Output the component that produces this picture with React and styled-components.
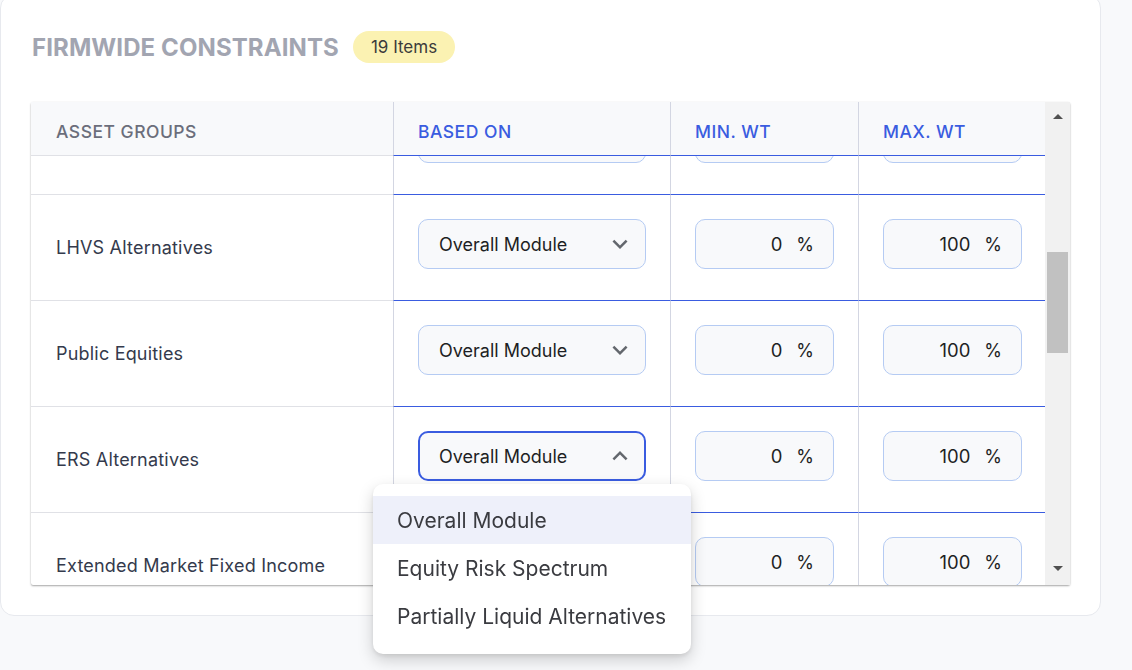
import React, { useLayoutEffect, useRef, useState } from 'react';
import styled, { createGlobalStyle } from 'styled-components';

const GlobalStyle = createGlobalStyle`
  html, body { margin: 0; padding: 0; }
  html { background: #f8f9fb; }
  body {
    background: #f8f9fb;
    font-family: Inter, "Noto Sans", "Liberation Sans", sans-serif;
    min-height: 670px;
  }
  * { box-sizing: border-box; }
`;

const COLS = '362px 277px 188px 188px';
const BLUE = '#3a5ce0';

const Card = styled.section`
  width: 1101px;
  margin-top: -6px;
  background: #fff;
  border: 1px solid #e7e9ee;
  border-radius: 14px;
  padding: 36px 30px 30px 30px;
`;

const TitleRow = styled.div`
  display: flex;
  align-items: center;
  gap: 14px;
  height: 32px;
  margin-bottom: 39px;
`;

const Title = styled.h2`
  margin: 0 0 0 1px;
  font-size: 24px;
  font-weight: 700;
  letter-spacing: 0.1px;
  color: #a2a5b1;
`;

const Badge = styled.span`
  display: inline-flex;
  align-items: center;
  height: 32px;
  padding: 0 18px;
  border-radius: 16px;
  background: #fbf2b2;
  color: #3b3b3b;
  font-size: 17px;
`;

const FrameWrap = styled.div`
  position: relative;
`;

const Frame = styled.div`
  display: flex;
  height: 483px;
  background: #fff;
  border-radius: 2px;
  box-shadow: 0 1px 2px rgba(0, 0, 0, 0.35), 0 0 1px rgba(0, 0, 0, 0.08);
`;

const ScrollArea = styled.div`
  flex: 1;
  overflow-y: auto;
  scrollbar-width: none;
  &::-webkit-scrollbar { display: none; }
`;

const HeaderRow = styled.div`
  position: sticky;
  top: 0;
  z-index: 2;
  display: grid;
  grid-template-columns: ${COLS};
  background: #f8f9fb;
`;

const HeadCell = styled.div`
  display: flex;
  align-items: center;
  height: 54px;
  padding: 5px 24px 0 ${(p) => (p.$first ? '25px' : '24px')};
  border-left: ${(p) => (p.$first ? 'none' : '1px solid #d3d6e2')};
  border-bottom: 1px solid ${(p) => (p.$first ? '#e0e1e6' : BLUE)};
  font-size: 17.5px;
  font-weight: 500;
  letter-spacing: 0.5px;
  color: ${(p) => (p.$first ? '#6b6e7b' : BLUE)};
  text-transform: uppercase;
`;

const Row = styled.div`
  display: grid;
  grid-template-columns: ${COLS};
`;

const Cell = styled.div`
  display: flex;
  align-items: center;
  height: 106px;
  padding: 0 24px 0 ${(p) => (p.$first ? '25px' : '24px')};
  border-left: ${(p) => (p.$first ? 'none' : '1px solid #d3d6e2')};
  border-bottom: 1px solid ${(p) => (p.$first ? '#e0e1e6' : BLUE)};
`;

const Label = styled.span`
  font-size: 18px;
  color: #343a4c;
  letter-spacing: 0.2px;
`;

const SelectBox = styled.div`
  display: flex;
  align-items: center;
  justify-content: space-between;
  width: 100%;
  height: 50px;
  margin-bottom: 7px;
  padding: ${(p) => (p.$open ? '0 9px 0 19px' : '0 10px 0 20px')};
  background: #f8f9fb;
  border: ${(p) => (p.$open ? `2px solid ${BLUE}` : '1px solid #b5cbf3')};
  border-radius: 10px;
  font-size: 18px;
  color: #1e1f24;
`;

const Chevron = styled.svg`
  width: 30px;
  height: 30px;
  fill: #63676d;
  transform: ${(p) => (p.$up ? 'rotate(180deg)' : 'none')};
`;

const NumberBox = styled.div`
  display: flex;
  align-items: center;
  justify-content: flex-end;
  gap: 14px;
  width: 100%;
  height: 50px;
  margin-bottom: 7px;
  padding-right: 19px;
  background: #f8f9fb;
  border: 1px solid #b5cbf3;
  border-radius: 10px;
  font-size: 18.5px;
  color: #1e1f24;
`;

const Percent = styled.span`
  font-size: 18px;
`;

const ScrollBar = styled.div`
  display: flex;
  flex-direction: column;
  width: 25px;
  background: #f1f1f1;
`;

const ArrowBtn = styled.div`
  display: flex;
  align-items: center;
  justify-content: center;
  height: 26px;
`;

const Triangle = styled.span`
  width: 0;
  height: 0;
  border-left: 5px solid transparent;
  border-right: 5px solid transparent;
  ${(p) =>
    p.$down
      ? 'border-top: 5px solid #505050; margin-top: -8px;'
      : 'border-bottom: 5px solid #505050; margin-top: 2px;'}
`;

const Track = styled.div`
  position: relative;
  flex: 1;
`;

const Thumb = styled.div`
  position: absolute;
  left: 2px;
  right: 2px;
  background: #c1c1c1;
`;

const Menu = styled.ul`
  position: absolute;
  left: 342px;
  top: 382px;
  z-index: 10;
  width: 318px;
  margin: 0;
  padding: 12px 0 14px 0;
  list-style: none;
  background: #fff;
  border-radius: 10px;
  box-shadow: 0 6px 16px rgba(0, 0, 0, 0.18), 0 2px 4px rgba(0, 0, 0, 0.08);
`;

const MenuItem = styled.li`
  display: flex;
  align-items: center;
  height: 48px;
  padding: 0 24px;
  font-size: 21px;
  color: #3a3b40;
  background: ${(p) => (p.$active ? '#eef0fa' : 'transparent')};
`;

const ASSETS = [
  'US Large Cap Equities',
  'International Equities',
  'Emerging Markets Equities',
  'Core Fixed Income',
  'Municipal Bonds',
  'Private Equity',
  'LHVS Alternatives',
  'Public Equities',
  'ERS Alternatives',
  'Extended Market Fixed Income',
  'Hedge Funds',
  'Real Estate',
  'Commodities',
  'Cash Equivalents',
  'Inflation Protected Bonds',
  'High Yield Bonds',
  'Infrastructure',
  'Private Credit',
  'Global Macro',
];

const OPTIONS = ['Overall Module', 'Equity Risk Spectrum', 'Partially Liquid Alternatives'];

const ChevronIcon = ({ up }) => (
  <Chevron viewBox="0 0 24 24" $up={up}>
    <path d="M16.59 8.59 12 13.17 7.41 8.59 6 10l6 6 6-6z" />
  </Chevron>
);

export default function App() {
  const scrollRef = useRef(null);
  const trackRef = useRef(null);
  const [thumb, setThumb] = useState({ top: 0, height: 0 });

  useLayoutEffect(() => {
    const el = scrollRef.current;
    el.scrollTop = 597;
    const track = trackRef.current.clientHeight;
    setThumb({
      top: (el.scrollTop / el.scrollHeight) * track,
      height: (el.clientHeight / el.scrollHeight) * track,
    });
  }, []);

  const openIndex = 8;

  return (
    <>
      <GlobalStyle />
      <Card>
        <TitleRow>
          <Title>FIRMWIDE CONSTRAINTS</Title>
          <Badge>19 Items</Badge>
        </TitleRow>
        <FrameWrap>
          <Frame>
            <ScrollArea ref={scrollRef}>
              <HeaderRow>
                <HeadCell $first>Asset Groups</HeadCell>
                <HeadCell>Based On</HeadCell>
                <HeadCell>Min. Wt</HeadCell>
                <HeadCell>Max. Wt</HeadCell>
              </HeaderRow>
              {ASSETS.map((name, i) => (
                <Row key={name}>
                  <Cell $first>
                    <Label>{name}</Label>
                  </Cell>
                  <Cell>
                    <SelectBox $open={i === openIndex}>
                      <span>Overall Module</span>
                      <ChevronIcon up={i === openIndex} />
                    </SelectBox>
                  </Cell>
                  <Cell>
                    <NumberBox>
                      <span>0</span>
                      <Percent>%</Percent>
                    </NumberBox>
                  </Cell>
                  <Cell>
                    <NumberBox>
                      <span>100</span>
                      <Percent>%</Percent>
                    </NumberBox>
                  </Cell>
                </Row>
              ))}
            </ScrollArea>
            <ScrollBar>
              <ArrowBtn>
                <Triangle />
              </ArrowBtn>
              <Track ref={trackRef}>
                <Thumb style={{ top: thumb.top, height: thumb.height }} />
              </Track>
              <ArrowBtn $down>
                <Triangle $down />
              </ArrowBtn>
            </ScrollBar>
          </Frame>
          <Menu>
            {OPTIONS.map((o, i) => (
              <MenuItem key={o} $active={i === 0}>
                {o}
              </MenuItem>
            ))}
          </Menu>
        </FrameWrap>
      </Card>
    </>
  );
}
